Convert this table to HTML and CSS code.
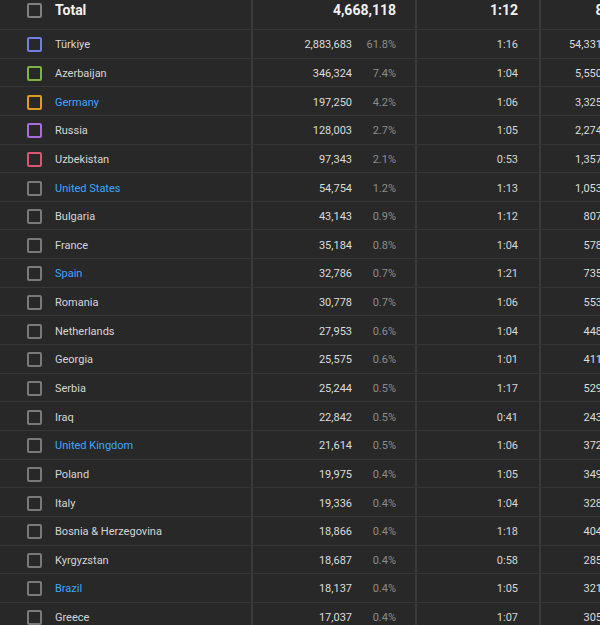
FILE: index.html
```html
<!DOCTYPE html>
<html>
<head>
<meta charset="utf-8">
<link rel="stylesheet" href="styles.css">
</head>
<body>
<div class="table">
  <div class="row head">
    <div class="c name"><span class="cb"></span><span class="label">Total</span></div>
    <div class="c num"><span class="v">4,668,118</span></div>
    <div class="c time">1:12</div>
    <div class="c num"><span class="v">86,214</span></div>
  </div>
  <div class="row"><div class="c name"><span class="cb blue"></span><span class="label">Türkiye</span></div><div class="c num"><span class="v">2,883,683</span><span class="p">61.8%</span></div><div class="c time">1:16</div><div class="c num"><span class="v">54,331</span><span class="p">63.0%</span></div></div>
  <div class="row"><div class="c name"><span class="cb green"></span><span class="label">Azerbaijan</span></div><div class="c num"><span class="v">346,324</span><span class="p">7.4%</span></div><div class="c time">1:04</div><div class="c num"><span class="v">5,550</span><span class="p">6.4%</span></div></div>
  <div class="row"><div class="c name"><span class="cb orange"></span><span class="label link">Germany</span></div><div class="c num"><span class="v">197,250</span><span class="p">4.2%</span></div><div class="c time">1:06</div><div class="c num"><span class="v">3,325</span><span class="p">3.9%</span></div></div>
  <div class="row"><div class="c name"><span class="cb purple"></span><span class="label">Russia</span></div><div class="c num"><span class="v">128,003</span><span class="p">2.7%</span></div><div class="c time">1:05</div><div class="c num"><span class="v">2,274</span><span class="p">2.6%</span></div></div>
  <div class="row"><div class="c name"><span class="cb red"></span><span class="label">Uzbekistan</span></div><div class="c num"><span class="v">97,343</span><span class="p">2.1%</span></div><div class="c time">0:53</div><div class="c num"><span class="v">1,357</span><span class="p">1.6%</span></div></div>
  <div class="row"><div class="c name"><span class="cb"></span><span class="label link">United States</span></div><div class="c num"><span class="v">54,754</span><span class="p">1.2%</span></div><div class="c time">1:13</div><div class="c num"><span class="v">1,053</span><span class="p">1.2%</span></div></div>
  <div class="row"><div class="c name"><span class="cb"></span><span class="label">Bulgaria</span></div><div class="c num"><span class="v">43,143</span><span class="p">0.9%</span></div><div class="c time">1:12</div><div class="c num"><span class="v">807</span><span class="p">0.9%</span></div></div>
  <div class="row"><div class="c name"><span class="cb"></span><span class="label">France</span></div><div class="c num"><span class="v">35,184</span><span class="p">0.8%</span></div><div class="c time">1:04</div><div class="c num"><span class="v">578</span><span class="p">0.7%</span></div></div>
  <div class="row"><div class="c name"><span class="cb"></span><span class="label link">Spain</span></div><div class="c num"><span class="v">32,786</span><span class="p">0.7%</span></div><div class="c time">1:21</div><div class="c num"><span class="v">735</span><span class="p">0.9%</span></div></div>
  <div class="row"><div class="c name"><span class="cb"></span><span class="label">Romania</span></div><div class="c num"><span class="v">30,778</span><span class="p">0.7%</span></div><div class="c time">1:06</div><div class="c num"><span class="v">553</span><span class="p">0.6%</span></div></div>
  <div class="row"><div class="c name"><span class="cb"></span><span class="label">Netherlands</span></div><div class="c num"><span class="v">27,953</span><span class="p">0.6%</span></div><div class="c time">1:04</div><div class="c num"><span class="v">448</span><span class="p">0.5%</span></div></div>
  <div class="row"><div class="c name"><span class="cb"></span><span class="label">Georgia</span></div><div class="c num"><span class="v">25,575</span><span class="p">0.6%</span></div><div class="c time">1:01</div><div class="c num"><span class="v">411</span><span class="p">0.5%</span></div></div>
  <div class="row"><div class="c name"><span class="cb"></span><span class="label">Serbia</span></div><div class="c num"><span class="v">25,244</span><span class="p">0.5%</span></div><div class="c time">1:17</div><div class="c num"><span class="v">529</span><span class="p">0.6%</span></div></div>
  <div class="row"><div class="c name"><span class="cb"></span><span class="label">Iraq</span></div><div class="c num"><span class="v">22,842</span><span class="p">0.5%</span></div><div class="c time">0:41</div><div class="c num"><span class="v">243</span><span class="p">0.3%</span></div></div>
  <div class="row"><div class="c name"><span class="cb"></span><span class="label link">United Kingdom</span></div><div class="c num"><span class="v">21,614</span><span class="p">0.5%</span></div><div class="c time">1:06</div><div class="c num"><span class="v">372</span><span class="p">0.4%</span></div></div>
  <div class="row"><div class="c name"><span class="cb"></span><span class="label">Poland</span></div><div class="c num"><span class="v">19,975</span><span class="p">0.4%</span></div><div class="c time">1:05</div><div class="c num"><span class="v">349</span><span class="p">0.4%</span></div></div>
  <div class="row"><div class="c name"><span class="cb"></span><span class="label">Italy</span></div><div class="c num"><span class="v">19,336</span><span class="p">0.4%</span></div><div class="c time">1:04</div><div class="c num"><span class="v">328</span><span class="p">0.4%</span></div></div>
  <div class="row"><div class="c name"><span class="cb"></span><span class="label">Bosnia &amp; Herzegovina</span></div><div class="c num"><span class="v">18,866</span><span class="p">0.4%</span></div><div class="c time">1:18</div><div class="c num"><span class="v">404</span><span class="p">0.5%</span></div></div>
  <div class="row"><div class="c name"><span class="cb"></span><span class="label">Kyrgyzstan</span></div><div class="c num"><span class="v">18,687</span><span class="p">0.4%</span></div><div class="c time">0:58</div><div class="c num"><span class="v">285</span><span class="p">0.3%</span></div></div>
  <div class="row"><div class="c name"><span class="cb"></span><span class="label link">Brazil</span></div><div class="c num"><span class="v">18,137</span><span class="p">0.4%</span></div><div class="c time">1:05</div><div class="c num"><span class="v">321</span><span class="p">0.4%</span></div></div>
  <div class="row"><div class="c name"><span class="cb"></span><span class="label">Greece</span></div><div class="c num"><span class="v">17,037</span><span class="p">0.4%</span></div><div class="c time">1:07</div><div class="c num"><span class="v">305</span><span class="p">0.4%</span></div></div>
</div>
</body>
</html>
```
FILE: styles.css
```css
html, body {
  margin: 0;
  padding: 0;
  background: #282828;
  overflow: hidden;
  width: 600px;
  height: 625px;
}
body {
  font-family: Roboto, "Liberation Sans", sans-serif;
  font-size: 11px;
  color: #d6d6d6;
}
.table {
  width: 670px;
}
.row {
  display: flex;
  height: 28.65px;
  box-sizing: border-box;
  border-bottom: 1px solid #363636;
}
.row.head {
  height: 30px;
  font-size: 14px;
  font-weight: 700;
  color: #f1f1f1;
}
.c {
  display: flex;
  align-items: center;
  box-sizing: border-box;
  border-right: 2px solid #3a3a3a;
  height: 100%;
  padding-top: 2px;
}
.head .c {
  padding-top: 0;
  padding-bottom: 9px;
}
.name {
  width: 253px;
  padding-left: 27px;
}
.num {
  justify-content: flex-end;
  width: 164px;
  padding-right: 19px;
}
.time {
  justify-content: flex-end;
  width: 124px;
  padding-right: 21px;
}
.c:last-child {
  width: 128px;
  padding-right: 21px;
}
.head .c:last-child {
  padding-right: 28px;
}
.cb {
  width: 15px;
  height: 15px;
  box-sizing: border-box;
  border: 2px solid #7a7a7a;
  border-radius: 2px;
  margin-right: 13px;
  flex: none;
}
.head .cb {
  border-color: #808080;
}
.cb.blue { border-color: #6f80e0; }
.cb.green { border-color: #7cb342; }
.cb.orange { border-color: #e09a1f; }
.cb.purple { border-color: #a86ddb; }
.cb.red { border-color: #d9566e; }
.label.link { color: #3ea6ff; }
.v { color: #dcdcdc; }
.head .v { color: #f1f1f1; }
.p {
  width: 44px;
  text-align: right;
  color: #8c8c8c;
}
```
